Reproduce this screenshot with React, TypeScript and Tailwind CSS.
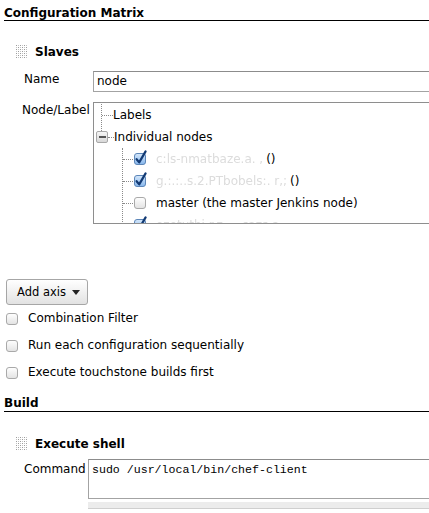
import React from 'react';

// ── small drawings ────────────────────────────────────────────────────────────

function Handle() {
  const dots: React.ReactNode[] = [];
  for (let r = 0; r < 7; r++) {
    for (let c = 0; c < 6; c++) {
      dots.push(<rect key={`${r}-${c}`} x={c * 2} y={r * 2} width="1" height="1" fill={(r + c) % 2 ? '#c4c4c4' : '#9c9c9c'} />);
    }
  }
  return (
    <svg width="12" height="14" viewBox="0 0 12 14" className="shrink-0">
      {dots}
    </svg>
  );
}

function MacCheck({ checked = false }: { checked?: boolean }) {
  return (
    <svg width="14" height="14" viewBox="0 0 14 14" className="shrink-0 overflow-visible">
      <defs>
        <linearGradient id="cbOff" x1="0" y1="0" x2="0" y2="1">
          <stop offset="0" stopColor="#ffffff" />
          <stop offset="1" stopColor="#e2e2e2" />
        </linearGradient>
        <linearGradient id="cbOn" x1="0" y1="0" x2="0" y2="1">
          <stop offset="0" stopColor="#d6e8fb" />
          <stop offset="1" stopColor="#86b6ec" />
        </linearGradient>
      </defs>
      <rect x="1.5" y="1.5" width="11" height="11" rx="2.5" fill={checked ? 'url(#cbOn)' : 'url(#cbOff)'} stroke={checked ? '#5d86b8' : '#a9a9a9'} />
      {checked && (
        <path d="M3.6 7.2 L6.2 10.4 L12.6 -0.6" fill="none" stroke="#123a74" strokeWidth="2.2" strokeLinecap="round" strokeLinejoin="round" />
      )}
    </svg>
  );
}

function MinusBox() {
  return (
    <div className="w-[12px] h-[12px] shrink-0 rounded-[2px] border border-[#a8a8a8] bg-gradient-to-b from-[#f6f6f6] to-[#d8d8d8] flex items-center justify-center">
      <div className="w-[7px] h-[2px] bg-[#555]" />
    </div>
  );
}

// ── tree rows ─────────────────────────────────────────────────────────────────

type Node = { checked: boolean; blur?: string; name?: string; parens?: boolean };

const NODES: Node[] = [
  { checked: true, blur: 'c:ls-nmatbaze.a. ,', parens: true },
  { checked: true, blur: 'g.:.:..s.2.PTbobels:. r,;', parens: true },
  { checked: false, name: 'master (the master Jenkins node)' },
  { checked: true, blur: 'ozotuthi.r.z.. ,.cazs.a' },
];

function NodeRow({ node }: { node: Node }) {
  return (
    <div className="flex items-center h-[22px] whitespace-nowrap">
      <span className="w-[10px] shrink-0 border-t border-dotted border-[#8a8a8a]" />
      <MacCheck checked={node.checked} />
      <span className="ml-[9px]">
        {node.name ? (
          node.name
        ) : (
          <>
            {/* redacted host name */}
            <span className="text-[#dcdcdc] blur-[0.6px]">{node.blur}</span>
            {node.parens && <span className="ml-[3px]">()</span>}
          </>
        )}
      </span>
    </div>
  );
}

// ── page ──────────────────────────────────────────────────────────────────────

export default function App() {
  return (
    <div className="w-[429px] h-[513px] overflow-hidden bg-white text-black text-[12px] leading-[15px] font-['DejaVu_Sans',Verdana,sans-serif]">
      {/* section header */}
      <div className="ml-[4px] pt-[6px] font-bold leading-[14px] border-b border-black">Configuration Matrix</div>

      {/* Slaves axis */}
      <div className="mt-[23px] ml-[16px] h-[16px] flex items-center gap-[7px]">
        <Handle />
        <span className="font-bold">Slaves</span>
      </div>

      <div className="mt-[11px] flex items-start">
        <span className="ml-[24px] w-[69px] shrink-0 pt-[1px]">Name</span>
        <div className="w-[360px] h-[21px] shrink-0 border border-[#a3a3a3] border-t-[#8c8c8c] flex items-center px-[3px]">node</div>
      </div>

      <div className="mt-[10px] flex items-start">
        <span className="ml-[22px] w-[71px] shrink-0 pt-[1px]">Node/Label</span>
        <div className="w-[360px] h-[122px] shrink-0 border border-[#8e8e8e] overflow-hidden pt-[1px]">
          <div className="ml-[7px] h-[27px] border-l border-dotted border-[#8a8a8a]">
            <div className="h-[22px] flex items-center">
              <span className="w-[11px] border-t border-dotted border-[#8a8a8a]" />
              <span>Labels</span>
            </div>
          </div>
          <div className="-mt-[5px] h-[22px] flex items-center ml-[2px]">
            <MinusBox />
            <span className="w-[6px] border-t border-dotted border-[#8a8a8a]" />
            <span>Individual nodes</span>
          </div>
          <div className="ml-[28px] border-l border-dotted border-[#8a8a8a]">
            {NODES.map((n, i) => (
              <NodeRow key={i} node={n} />
            ))}
          </div>
        </div>
      </div>

      {/* add axis */}
      <button className="mt-[55px] ml-[6px] w-[82px] h-[26px] rounded-[3px] border border-[#a6a6a6] bg-gradient-to-b from-white to-[#e2e2e2] flex items-center pl-[10px] text-[11.5px] font-['DejaVu_Sans',Verdana,sans-serif]">
        <span>Add axis</span>
        <svg width="8" height="5" viewBox="0 0 8 5" className="ml-[6px]">
          <path d="M0 0 H8 L4 5 Z" fill="#222" />
        </svg>
      </button>

      {/* options */}
      <div className="flex flex-col">
        {['Combination Filter', 'Run each configuration sequentially', 'Execute touchstone builds first'].map((t) => (
          <label key={t} className="h-[27px] flex items-center ml-[5px] gap-[9px]">
            <MacCheck />
            <span>{t}</span>
          </label>
        ))}
      </div>

      {/* build section */}
      <div className="mt-[10px] ml-[4px] font-bold border-b border-black">Build</div>

      <div className="mt-[24px] ml-[16px] h-[16px] flex items-center gap-[7px]">
        <Handle />
        <span className="font-bold">Execute shell</span>
      </div>

      <div className="mt-[7px] flex items-start">
        <span className="ml-[24px] w-[64px] shrink-0 pt-[3px]">Command</span>
        <div className="w-[360px] shrink-0">
          <div className="h-[40px] border border-[#a3a3a3] border-t-[#8c8c8c] px-[3px] pt-[2px] font-['Liberation_Mono','Courier_New',monospace] text-[11.6px] leading-[15px]">
            sudo /usr/local/bin/chef-client
          </div>
          <div className="mt-[3px] h-[7px] bg-[#ececec] border-b border-[#cfcfcf]" />
        </div>
      </div>
    </div>
  );
}
